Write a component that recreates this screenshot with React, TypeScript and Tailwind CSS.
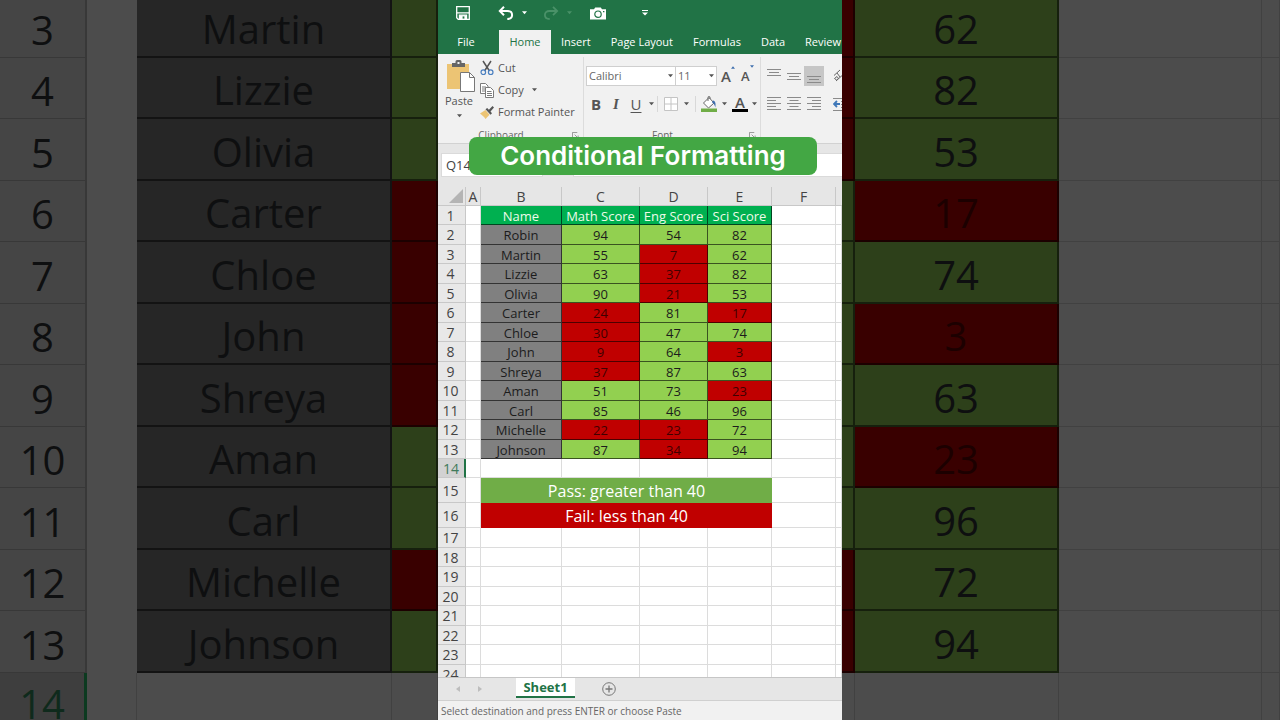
import type { ReactNode } from 'react';
import clsx from 'clsx';

type Student = { name: string; scores: number[] };

const students: Student[] = [
  { name: 'Robin', scores: [94, 54, 82] },
  { name: 'Martin', scores: [55, 7, 62] },
  { name: 'Lizzie', scores: [63, 37, 82] },
  { name: 'Olivia', scores: [90, 21, 53] },
  { name: 'Carter', scores: [24, 81, 17] },
  { name: 'Chloe', scores: [30, 47, 74] },
  { name: 'John', scores: [9, 64, 3] },
  { name: 'Shreya', scores: [37, 87, 63] },
  { name: 'Aman', scores: [51, 73, 23] },
  { name: 'Carl', scores: [85, 46, 96] },
  { name: 'Michelle', scores: [22, 23, 72] },
  { name: 'Johnson', scores: [87, 34, 94] },
];

const PASS_MARK = 40;
const columns = ['A', 'B', 'C', 'D', 'E', 'F'];
const headings = ['Name', 'Math Score', 'Eng Score', 'Sci Score'];
const tabs = ['Insert', 'Page Layout', 'Formulas', 'Data', 'Review'];
const emptyRows = [17, 18, 19, 20, 21, 22, 23, 24];

function Caret({ className }: { className?: string }) {
  return (
    <svg viewBox="0 0 6 4" className={clsx('h-1 w-[5px] shrink-0', className)} fill="currentColor">
      <path d="M0 0h6L3 3.6z" />
    </svg>
  );
}

function TitleBar() {
  return (
    <div className="flex h-[30px] items-center pb-1 pl-[18px] text-white">
      <button aria-label="Save">
        <svg viewBox="0 0 14 14" className="h-3.5 w-3.5">
          <path d="M.7.7h12.6v12.6H2.2L.7 11.8z" fill="none" stroke="currentColor" strokeWidth="1.3" />
          <path d="M1 6.8h12M3.4 13V9.2h7.2V13z" fill="currentColor" stroke="currentColor" strokeWidth="1.2" />
          <path d="M6.6 10.4h1.8v2.2H6.6z" fill="#217346" />
        </svg>
      </button>
      <button aria-label="Undo" className="ml-7">
        <svg viewBox="0 0 16 14" className="h-3.5 w-4" fill="none" stroke="currentColor" strokeWidth="2">
          <path d="M6 .8 1.8 5 6 9.2M2 5h7.5c3 0 4.6 1.7 4.6 4 0 2.4-1.9 4-4.8 4" />
        </svg>
      </button>
      <Caret className="ml-2" />
      <button aria-label="Redo" className="ml-4 text-[#4a9168]">
        <svg viewBox="0 0 16 14" className="h-3.5 w-4" fill="none" stroke="currentColor" strokeWidth="1.8">
          <path d="M10 .8 14.2 5 10 9.2M14 5H6.5C3.5 5 1.9 6.7 1.9 9c0 2.4 1.9 4 4.8 4" />
        </svg>
      </button>
      <Caret className="ml-2 text-[#4a9168]" />
      <button aria-label="Camera" className="ml-[18px]">
        <svg viewBox="0 0 16 13" className="h-[13px] w-4">
          <path d="M0 2.2h4L5.2.4h5.6L12 2.2h4v10.4H0z" fill="currentColor" />
          <circle cx="8" cy="7.2" r="3.2" fill="none" stroke="#217346" strokeWidth="1.2" />
          <path d="M13 4h1.4v1.2H13z" fill="#217346" />
        </svg>
      </button>
      <button aria-label="Customize Quick Access Toolbar" className="ml-9">
        <svg viewBox="0 0 6 6" className="h-1.5 w-1.5" fill="currentColor">
          <path d="M0 0h6v1H0zM0 2.4h6L3 5.6z" />
        </svg>
      </button>
    </div>
  );
}

function TabBar() {
  return (
    <nav className="flex h-6 items-stretch overflow-hidden text-[11px] whitespace-nowrap text-white">
      <button className="w-14 shrink-0">File</button>
      <button className="ml-[5px] w-[52px] shrink-0 bg-[#f1f1f1] text-[#217346]">Home</button>
      <div className="ml-2.5 flex gap-5">
        {tabs.map((tab) => (
          <button key={tab}>{tab}</button>
        ))}
      </div>
    </nav>
  );
}

function Launcher() {
  return (
    <svg viewBox="0 0 8 8" className="h-[7px] w-[7px]" fill="none" stroke="#8a8a8a">
      <path d="M.5 6V.5H6M3 3l4 4M7 4v3H4" />
    </svg>
  );
}

function Group({ label, className, children }: { label: string; className?: string; children: ReactNode }) {
  return (
    <section className={clsx('flex shrink-0 flex-col', className)}>
      {children}
      <div className="mt-auto flex h-4 items-center pr-1 text-[10px] text-[#666]">
        <span className="flex-1 pr-2 text-center">{label}</span>
        <Launcher />
      </div>
    </section>
  );
}

function ClipboardGroup() {
  return (
    <Group label="Clipboard" className="w-[146px] border-r border-[#dcdcdc] text-[11px]">
      <div className="flex">
        <button className="flex w-[42px] flex-col items-center pt-[3px]">
          <svg viewBox="0 0 28 32" className="ml-1 h-8 w-7">
            <path d="M0 4h22v25H0z" fill="#ecc474" />
            <path d="M5 3h3.5V1.5A1.5 1.5 0 0 1 10 0h3a1.5 1.5 0 0 1 1.5 1.5V3H18v4H5z" fill="#666" />
            <path d="M10.5 2h2v2h-2z" fill="#f1f1f1" />
            <path d="M13.5 12.5h9l5 5v14h-14z" fill="#fff" stroke="#777" />
            <path d="M22.5 12.5v5h5" fill="none" stroke="#777" />
          </svg>
          <span className="leading-[18px]">Paste</span>
          <Caret className="mt-1" />
        </button>
        <div className="flex flex-col items-start">
          <button className="flex h-[22px] items-center gap-1">
            <svg viewBox="0 0 14 16" className="h-4 w-3.5" fill="none">
              <path d="M3 1l6.5 10M11 1 4.5 11" stroke="#555" strokeWidth="1.5" />
              <circle cx="3.3" cy="12.2" r="2.3" stroke="#4a7fc0" strokeWidth="1.2" />
              <circle cx="10.7" cy="12.2" r="2.3" stroke="#4a7fc0" strokeWidth="1.2" />
            </svg>
            Cut
          </button>
          <button className="flex h-[22px] items-center gap-1">
            <svg viewBox="0 0 14 15" className="h-[15px] w-3.5" fill="#fff" stroke="#7a7a7a">
              <path d="M.5.5h5l2.5 2.5v7.5H.5zM2 4h4M2 6h4M2 8h3" />
              <path d="M5.5 4.5h5l3 3v7h-8z" />
              <path d="M7 8.5h4.5M7 10.5h5M7 12.5h5" />
            </svg>
            Copy
            <Caret className="ml-1" />
          </button>
          <button className="flex h-[22px] items-center gap-1 whitespace-nowrap">
            <svg viewBox="0 0 14 13" className="h-[13px] w-3.5">
              <path d="M0 7.5 5.5 4l4 4.8L5.5 13C4 10.5 2 9 0 7.5z" fill="#ecc474" />
              <path d="M5.5 3.2 7.2 2l1.7 1.8L12.5 0 14 1.5l-3.5 4 1.5 1.8-1.5 1.4z" fill="#555" />
            </svg>
            Format Painter
          </button>
        </div>
      </div>
    </Group>
  );
}

function Divider() {
  return <span className="h-4 w-px shrink-0 bg-[#d8d8d8]" />;
}

function FontGroup() {
  return (
    <Group label="Font" className="w-[177px] border-r border-[#dcdcdc]">
      <div className="flex flex-col gap-2 pt-[9px] pl-0.5">
        <div className="flex h-5 items-center">
          <div className="relative flex items-center">
            <select aria-label="Font" className="h-5 w-[90px] appearance-none border border-[#cfcfcf] bg-white pl-0.5 text-[11px] text-[#666]">
              <option>Calibri</option>
            </select>
            <Caret className="pointer-events-none absolute right-[3px]" />
          </div>
          <div className="relative -ml-px flex items-center">
            <select aria-label="Font size" className="h-5 w-[42px] appearance-none border border-[#cfcfcf] bg-white pl-0.5 text-[11px] text-[#666]">
              <option>11</option>
            </select>
            <Caret className="pointer-events-none absolute right-[3px]" />
          </div>
          <button aria-label="Increase font size" className="ml-1 flex items-start">
            <span className="text-[15px] leading-5 font-semibold">A</span>
            <svg viewBox="0 0 6 4" className="h-[3px] w-1" fill="#3f6fae">
              <path d="M3 0l3 4H0z" />
            </svg>
          </button>
          <button aria-label="Decrease font size" className="ml-1.5 flex items-start">
            <span className="text-[13px] leading-[22px] font-semibold">A</span>
            <svg viewBox="0 0 6 4" className="h-[3px] w-1" fill="#3f6fae">
              <path d="M0 0h6L3 4z" />
            </svg>
          </button>
        </div>
        <div className="flex h-5 items-center text-[15px]">
          <button className="w-5 font-bold">B</button>
          <button className="w-5 font-['Liberation_Serif',serif] font-bold italic">I</button>
          <button className="w-5 underline underline-offset-2">U</button>
          <Caret className="mx-[3px]" />
          <Divider />
          <button aria-label="Borders" className="ml-1.5">
            <svg viewBox="0 0 14 14" className="h-3.5 w-3.5" fill="#fff" stroke="#c4c4c4">
              <path d="M.5.5h13v13H.5zM7 .5v13M.5 7h13" />
            </svg>
          </button>
          <Caret className="mx-1.5" />
          <Divider />
          <button aria-label="Fill color" className="ml-[5px]">
            <svg viewBox="0 0 16 16" className="h-4 w-4">
              <path d="M8 1.5 13 7l-5.5 5L2.500 7z" fill="#fff" stroke="#666" />
              <path d="M7 5V1.5a1 1 0 0 1 2 0V3" fill="none" stroke="#666" />
              <path d="M12 4.5c2.5.5 3 3 2.3 7-.8-2.5-1-4-3.300-5z" fill="#3f6fae" />
              <path d="M0 12.5h16V16H0z" fill="#70ad47" />
            </svg>
          </button>
          <Caret className="mx-[5px]" />
          <button aria-label="Font color" className="flex w-4 flex-col items-center">
            <span className="h-[13px] leading-[13px] font-semibold">A</span>
            <span className="h-[3px] w-full bg-black" />
          </button>
          <Caret className="ml-1" />
        </div>
      </div>
    </Group>
  );
}

function Lines({ d }: { d: string }) {
  return (
    <svg viewBox="0 0 14 16" className="h-4 w-3.5" fill="none" stroke="#8a8a8a">
      <path d={d} />
    </svg>
  );
}

function AlignmentGroup() {
  return (
    <section className="flex min-w-0 flex-1 flex-col gap-2 overflow-hidden pt-[9px] pl-[3px]">
      <div className="flex h-5 items-center">
        <button aria-label="Top align" className="flex w-5 shrink-0 justify-center">
          <Lines d="M0 1.5h14M2 4.5h10M0 7.5h14" />
        </button>
        <button aria-label="Middle align" className="flex w-5 shrink-0 justify-center">
          <Lines d="M0 5.5h14M2 8.5h10M0 11.5h14" />
        </button>
        <button aria-label="Bottom align" className="flex h-5 w-5 shrink-0 items-center justify-center bg-[#c6c6c6]">
          <Lines d="M0 8.5h14M2 11.5h10M0 14.5h14" />
        </button>
        <span className="ml-0.5">
          <Divider />
        </span>
        <button aria-label="Orientation" className="ml-[7px] shrink-0">
          <svg viewBox="0 0 14 14" className="h-3.5 w-3.5" fill="none" stroke="#666">
            <path d="M1 6.5 7 1M3 12 13 3M10 3h3v3M1.5 9.5l2.5-2 1.5 2-2 1.5zM4 4l3 4" />
          </svg>
        </button>
      </div>
      <div className="flex h-5 items-center">
        <button aria-label="Align left" className="flex w-5 shrink-0 justify-center">
          <Lines d="M0 1.5h14M0 4.5h9M0 7.5h14M0 10.5h9M0 13.5h14" />
        </button>
        <button aria-label="Center" className="flex w-5 shrink-0 justify-center">
          <Lines d="M0 1.5h14M2.5 4.5h9M0 7.5h14M2.5 10.5h9M0 13.5h14" />
        </button>
        <button aria-label="Align right" className="flex w-5 shrink-0 justify-center">
          <Lines d="M0 1.5h14M5 4.5h9M0 7.5h14M5 10.5h9M0 13.5h14" />
        </button>
        <span className="ml-0.5">
          <Divider />
        </span>
        <button aria-label="Decrease indent" className="ml-[7px] shrink-0">
          <svg viewBox="0 0 14 14" className="h-3.5 w-3.5" fill="none">
            <path d="M7 7H1.5M4 4 1 7l3 3" stroke="#3f78b8" strokeWidth="1.8" />
            <path d="M0 1.5h14M8 4.5h6M8 7.5h6M8 10.5h6M0 13.5h14" stroke="#8a8a8a" />
          </svg>
        </button>
      </div>
    </section>
  );
}

function FormulaBar() {
  return (
    <div className="flex h-11 items-start gap-[30px] border-t border-[#d2d2d2] bg-[#e6e6e6] pt-[9px] pl-[3px]">
      <input aria-label="Name box" defaultValue="Q14" className="h-6 w-[102px] border border-[#dadada] bg-white pl-1 text-[13px] text-[#444]" />
      <input aria-label="Formula" className="h-6 min-w-0 flex-1 border border-r-0 border-[#dadada] bg-white" />
    </div>
  );
}

const gridCell = 'border-r border-b border-[#dcdcdc] p-0';
const rowHead = 'border-r border-b border-[#c8c8c8] bg-[#e8e8e8] p-0 pt-px pr-0.5 text-sm leading-4 font-normal text-[#444]';
const dataCell = 'border-r border-b border-black/60 p-0 pt-px text-center';

function Blank({ count }: { count: number }) {
  return (
    <>
      {Array.from({ length: count }, (_, i) => (
        <td key={i} className={gridCell} />
      ))}
    </>
  );
}

function Sheet() {
  return (
    <div className="min-h-0 flex-1 overflow-hidden bg-white">
      <table className="w-full table-fixed border-separate border-spacing-0 text-[13px] leading-4 text-[#1c1c1c]">
        <colgroup>
          <col className="w-7" />
          <col className="w-[15px]" />
          <col className="w-[81px]" />
          <col className="w-[78px]" />
          <col className="w-[68px]" />
          <col className="w-16" />
          <col className="w-16" />
          <col />
        </colgroup>
        <thead>
          <tr className="h-[19px] bg-[#e6e6e6] text-sm leading-4 text-[#444]">
            <td className="border-r border-b border-[#c8c8c8] p-0">
              <svg viewBox="0 0 14 14" className="ml-[11px] h-3.5 w-3.5" fill="#b4b4b4">
                <path d="M14 0v14H0z" />
              </svg>
            </td>
            {columns.map((c) => (
              <th key={c} scope="col" className="border-r border-b border-[#c8c8c8] p-0 pt-px text-center font-normal">
                {c}
              </th>
            ))}
            <th className="border-b border-[#c8c8c8] p-0" />
          </tr>
        </thead>
        <tbody>
          <tr className="h-[19px]">
            <th scope="row" className={rowHead}>1</th>
            <td className={gridCell} />
            {headings.map((h) => (
              <td key={h} className="border-r border-b border-black/60 bg-[#00b050] p-0 pt-px text-center font-medium whitespace-nowrap text-[#eefbe9]">
                {h}
              </td>
            ))}
            <Blank count={2} />
          </tr>
          {students.map((s, i) => (
            <tr key={s.name} className={i % 2 === 0 ? 'h-5' : 'h-[19px]'}>
              <th scope="row" className={rowHead}>{i + 2}</th>
              <td className={gridCell} />
              <td className={clsx(dataCell, 'bg-[#808080]')}>{s.name}</td>
              {s.scores.map((score, j) => (
                <td key={j} className={clsx(dataCell, score > PASS_MARK ? 'bg-[#92d050]' : 'bg-[#c00000] text-[#400000]')}>
                  {score}
                </td>
              ))}
              <Blank count={2} />
            </tr>
          ))}
          <tr className="h-[19px]">
            <th scope="row" className="border-r-2 border-b border-r-[#217346] border-b-[#c8c8c8] bg-[#d2d2d2] p-0 pt-px text-sm leading-4 font-normal text-[#3f7a5a]">14</th>
            <Blank count={7} />
          </tr>
          <tr className="h-[25px]">
            <th scope="row" className={rowHead}>15</th>
            <td className={gridCell} />
            <td colSpan={4} className="bg-[#70ad47] p-0 pt-px text-center text-base text-white">Pass: greater than 40</td>
            <Blank count={2} />
          </tr>
          <tr className="h-[25px]">
            <th scope="row" className={rowHead}>16</th>
            <td className={gridCell} />
            <td colSpan={4} className="bg-[#c00000] p-0 pt-px text-center text-base text-white">Fail: less than 40</td>
            <Blank count={2} />
          </tr>
          {emptyRows.map((n, i) => (
            <tr key={n} className={i % 2 === 0 ? 'h-5' : 'h-[19px]'}>
              <th scope="row" className={rowHead}>{n}</th>
              <Blank count={7} />
            </tr>
          ))}
        </tbody>
      </table>
    </div>
  );
}

function SheetTabs() {
  return (
    <div className="flex h-[23px] shrink-0 items-start border-t border-[#c6c6c6] bg-[#e6e6e6]">
      <button aria-label="Previous sheet" className="ml-[18px] self-center text-[#bdbdbd]">
        <svg viewBox="0 0 4 6" className="h-1.5 w-1" fill="currentColor"><path d="M4 0v6L0 3z" /></svg>
      </button>
      <button aria-label="Next sheet" className="ml-[18px] self-center text-[#bdbdbd]">
        <svg viewBox="0 0 4 6" className="h-1.5 w-1" fill="currentColor"><path d="M0 0v6l4-3z" /></svg>
      </button>
      <button className="ml-[34px] h-5 w-[59px] border-b-2 border-[#217346] bg-white text-[13px] leading-[18px] font-bold text-[#217346]">Sheet1</button>
      <button aria-label="New sheet" className="ml-[27px] self-center">
        <svg viewBox="0 0 14 14" className="h-3.5 w-3.5" fill="none" stroke="#777">
          <circle cx="7" cy="7" r="6.3" />
          <path d="M7 3.5v7M3.5 7h7" strokeWidth="1.3" />
        </svg>
      </button>
    </div>
  );
}

// Dimmed, enlarged copy of the sheet that runs behind the main window on both sides.
function ZoomedSheet({ side }: { side: 'left' | 'right' }) {
  const line = 'border-r border-b border-[#414141] p-0';
  const dark = 'border-r-2 border-b-2 border-black/50 p-0 pb-1 text-center align-bottom';
  const fill = (score: number) => (score > PASS_MARK ? 'bg-[#2d401a]' : 'bg-[#390000] text-[#1c0000]');

  return (
    <div className="min-w-0 flex-1 overflow-hidden bg-[#4c4c4c]" aria-hidden="true">
      <table className="w-full table-fixed border-separate border-spacing-0 text-[40px] leading-[46px] text-[#0e0f10]">
        {side === 'left' ? (
          <colgroup>
            <col className="w-[87px]" />
            <col className="w-[50px]" />
            <col className="w-[255px]" />
            <col />
          </colgroup>
        ) : (
          <colgroup>
            <col className="w-[13px]" />
            <col className="w-[204px]" />
            <col className="w-[203px]" />
            <col />
          </colgroup>
        )}
        <tbody>
          {students.slice(1).map((s, i) => (
            <tr key={s.name} className={i === 0 ? 'h-[58px]' : i % 2 === 0 ? 'h-[62px]' : 'h-[61px]'}>
              {side === 'left' ? (
                <>
                  <td className="border-r-2 border-b border-[#383838] bg-[#454545] p-0 pb-1 text-center align-bottom">{i + 3}</td>
                  <td />
                  <td className={clsx(dark, 'bg-[#262626]')}>{s.name}</td>
                  <td className={clsx(dark, fill(s.scores[0]))} />
                </>
              ) : (
                <>
                  <td className={clsx(dark, fill(s.scores[1]))} />
                  <td className={clsx(dark, fill(s.scores[2]))}>{s.scores[2]}</td>
                  <td className={line} />
                  <td className={line} />
                </>
              )}
            </tr>
          ))}
          <tr className="h-[62px]">
            {side === 'left' ? (
              <>
                <td className="border-r-3 border-[#0c3a20] bg-[#3e3e3e] p-0 pb-2 text-center align-bottom text-[#0f2a1c]">14</td>
                <td className={line} />
                <td className={line} />
                <td className={line} />
              </>
            ) : (
              <>
                <td className={line} />
                <td className={line} />
                <td className={line} />
                <td className={line} />
              </>
            )}
          </tr>
        </tbody>
      </table>
    </div>
  );
}

function App() {
  return (
    <div className="flex h-screen overflow-hidden bg-[#4c4c4c] font-['Open_Sans','Noto_Sans',sans-serif]">
      <ZoomedSheet side="left" />
      <main className="relative flex w-full max-w-[404px] shrink-0 flex-col overflow-hidden bg-[#f1f1f1] text-[#555]">
        <header className="shrink-0 bg-[#217346]">
          <TitleBar />
          <TabBar />
        </header>
        <div className="flex h-[89px] shrink-0 pt-[3px]">
          <ClipboardGroup />
          <FontGroup />
          <AlignmentGroup />
        </div>
        <FormulaBar />
        <Sheet />
        <SheetTabs />
        <footer className="flex h-5 shrink-0 items-center border-t border-[#d0d0d0] px-[3px] pt-px text-[10px] text-[#666]">
          Select destination and press ENTER or choose Paste
        </footer>
        <h1 className="absolute top-[137px] right-[25px] left-[31px] rounded-lg bg-[#43a744] text-center font-['Inter',sans-serif] text-[26px] leading-[38px] font-semibold whitespace-nowrap text-white">
          Conditional Formatting
        </h1>
      </main>
      <ZoomedSheet side="right" />
    </div>
  );
}

export default App;
